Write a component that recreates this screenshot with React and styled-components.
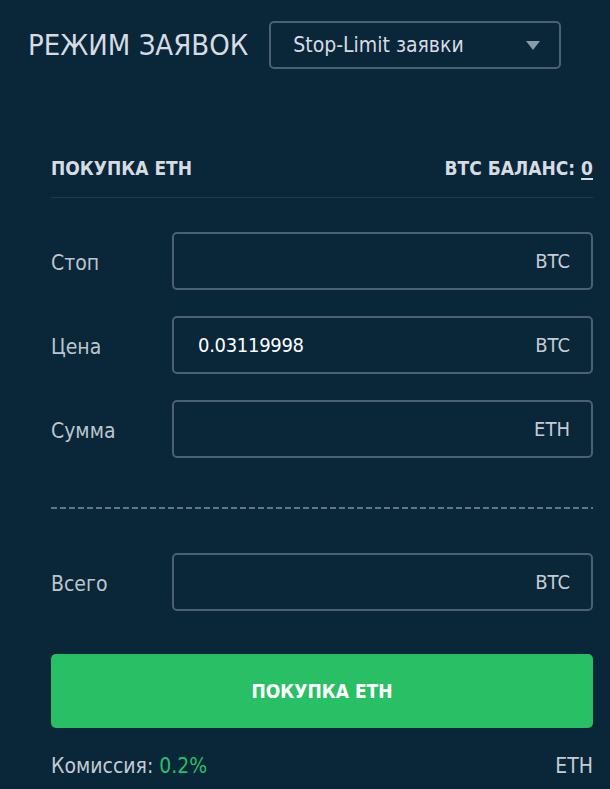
import React from "react";
import styled, { createGlobalStyle } from "styled-components";

const Global = createGlobalStyle`
  html, body { margin: 0; padding: 0; background: #0a2639; }
  body { font-family: "DejaVu Sans Condensed", "Liberation Sans Narrow", "Roboto", sans-serif; }
  * { box-sizing: border-box; }
`;

const Page = styled.div`
  width: 610px;
  height: 789px;
  background: #0a2639;
  overflow: hidden;
  color: #d3d9de;
`;

const Header = styled.div`
  display: flex;
  align-items: center;
  padding: 21px 0 0 28px;
  gap: 21px;
`;

const Title = styled.div`
  font-size: 29px;
  font-weight: 400;
  color: #d6dce1;
`;

const Select = styled.div`
  width: 292px;
  height: 48px;
  border: 2px solid #4b6070;
  border-radius: 5px;
  display: flex;
  align-items: center;
  justify-content: space-between;
  padding: 0 19px 0 22px;
  font-size: 21px;
  color: #d6dce1;
`;

const Form = styled.div`
  padding: 86px 17px 0 51px;
`;

const SectionHead = styled.div`
  display: flex;
  justify-content: space-between;
  align-items: center;
  height: 43px;
  padding-bottom: 16px;
  border-bottom: 1px solid #1e3a4c;
  font-weight: 700;
  font-size: 19px;
  color: #d6dce1;
`;

const Balance = styled.span`
  u { text-decoration-thickness: 2px; text-underline-offset: 3px; }
`;

const Fields = styled.div`
  display: flex;
  flex-direction: column;
  gap: 26px;
  padding-top: 34px;
`;

const Row = styled.div`
  display: flex;
  align-items: center;
`;

const Label = styled.div`
  width: 121px;
  font-size: 21px;
  color: #bcc5cc;
  padding-top: 3px;
`;

const Input = styled.div`
  flex: 1;
  height: 58px;
  border: 2px solid #4b6070;
  border-radius: 5px;
  display: flex;
  align-items: center;
  justify-content: space-between;
  padding: 0 21px 0 24px;
  font-size: 20px;
`;

const Value = styled.span`
  color: #ffffff;
  letter-spacing: -0.3px;
`;

const Unit = styled.span`
  color: #c4ccd3;
`;

const Dashed = styled.div`
  margin-top: 49px;
  height: 2px;
  background: repeating-linear-gradient(to right, #647684 0 6px, transparent 6px 9px);
`;

const TotalRow = styled(Row)`
  margin-top: 44px;
`;

const Button = styled.div`
  margin-top: 43px;
  height: 74px;
  border-radius: 5px;
  background: #29bf65;
  color: #ffffff;
  font-weight: 700;
  font-size: 19px;
  display: flex;
  align-items: center;
  justify-content: center;
`;

const Footer = styled.div`
  display: flex;
  justify-content: space-between;
  margin-top: 26px;
  font-size: 21px;
  color: #c4ccd3;
`;

const Green = styled.span`
  color: #29bf65;
`;

const Field = ({ label, value, unit, as }) => {
  const R = as || Row;
  return (
    <R>
      <Label>{label}</Label>
      <Input>
        <Value>{value}</Value>
        <Unit>{unit}</Unit>
      </Input>
    </R>
  );
};

export default function App() {
  return (
    <Page>
      <Global />
      <Header>
        <Title>РЕЖИМ ЗАЯВОК</Title>
        <Select>
          <span>Stop-Limit заявки</span>
          <svg width="14" height="9" viewBox="0 0 14 9">
            <path d="M0 0 H14 L7 9 Z" fill="#8b9aa6" />
          </svg>
        </Select>
      </Header>
      <Form>
        <SectionHead>
          <span>ПОКУПКА ETH</span>
          <Balance>BTC БАЛАНС: <u>0</u></Balance>
        </SectionHead>
        <Fields>
          <Field label="Стоп" value="" unit="BTC" />
          <Field label="Цена" value="0.03119998" unit="BTC" />
          <Field label="Сумма" value="" unit="ETH" />
        </Fields>
        <Dashed />
        <Field as={TotalRow} label="Всего" value="" unit="BTC" />
        <Button>ПОКУПКА ETH</Button>
        <Footer>
          <span>Комиссия: <Green>0.2%</Green></span>
          <span>ETH</span>
        </Footer>
      </Form>
    </Page>
  );
}
